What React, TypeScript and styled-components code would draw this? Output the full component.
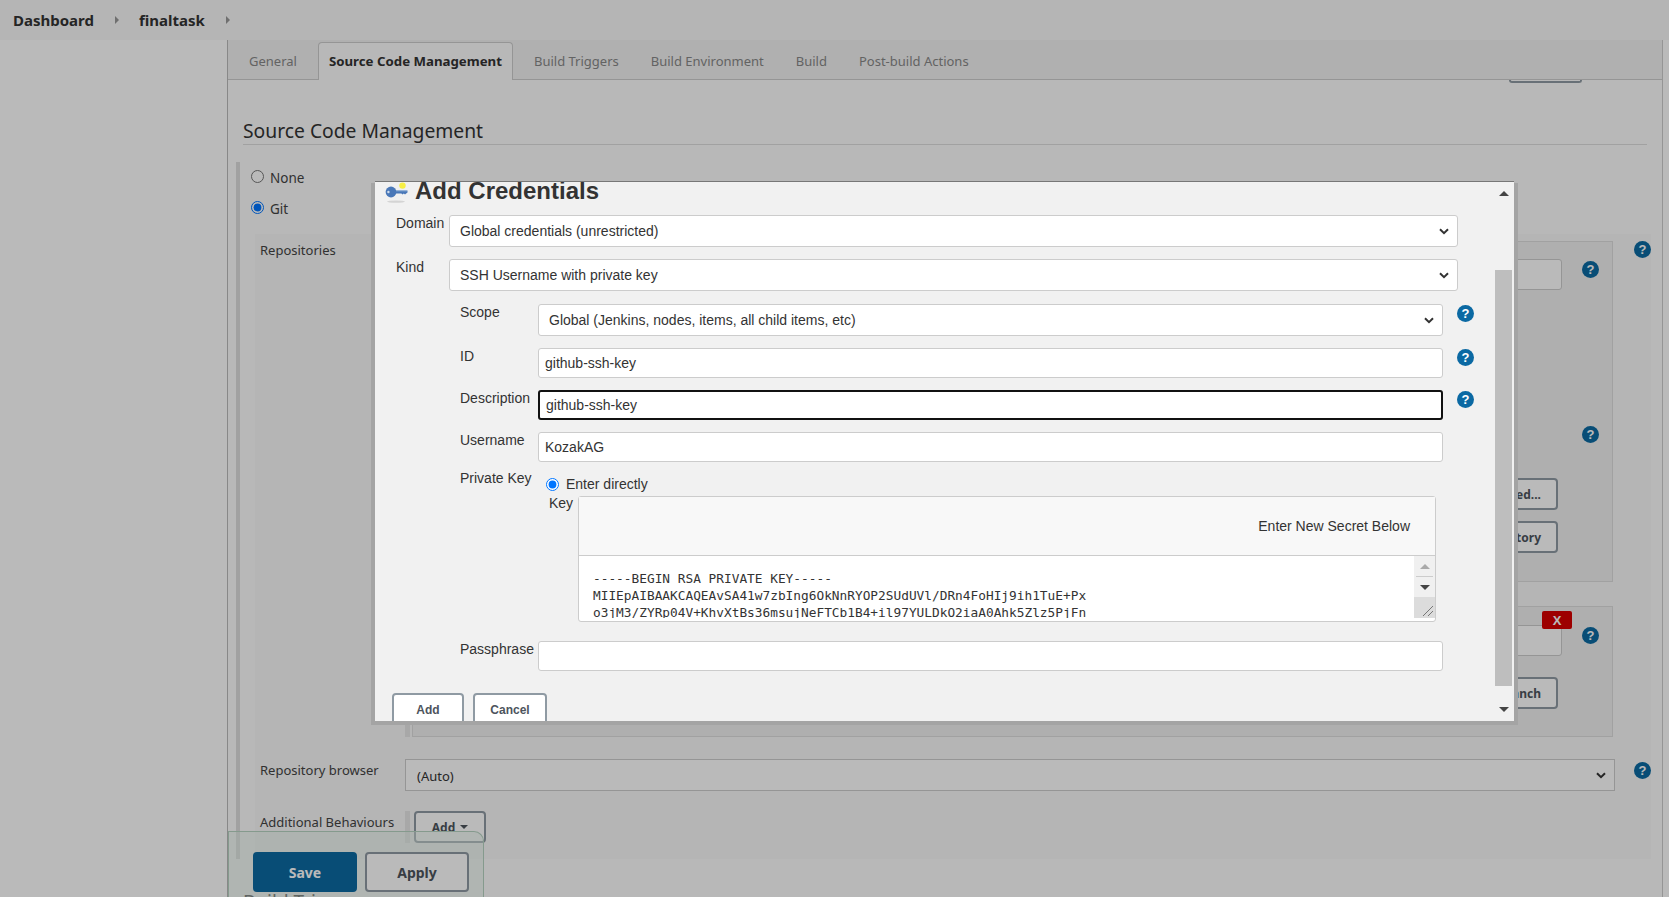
import { ReactNode } from "react";
import styled, { createGlobalStyle, css } from "styled-components";

const GlobalStyle = createGlobalStyle`
  html, body {
    margin: 0;
    height: 897px;
    overflow: hidden;
    background: #fff;
  }
  * {
    box-sizing: border-box;
  }
`;

const chevron = `url("data:image/svg+xml,%3Csvg xmlns='http://www.w3.org/2000/svg' width='10' height='7' viewBox='0 0 10 7'%3E%3Cpath d='M1 1.2 L5 5.2 L9 1.2' fill='none' stroke='%23333' stroke-width='2'/%3E%3C/svg%3E")`;

const selectBase = css`
  appearance: none;
  padding-left: 10px;
  background-color: #fff;
  background-image: ${chevron};
  background-repeat: no-repeat;
  background-position: right 8px center;
  color: #333;
  border: 1px solid #ccc;
`;

const Page = styled.div`
  position: relative;
  width: 1669px;
  height: 897px;
  overflow: hidden;
  background: #fff;
  color: #333;
  font-family: "Noto Sans", sans-serif;
  font-size: 13px;
`;

const Crumbs = styled.div`
  height: 40px;
  display: flex;
  align-items: center;
  padding-left: 13px;
  background: #f9f9f9;
  font-size: 15px;
  font-weight: 700;
  color: #333;
`;

const CrumbArrow = styled.span`
  width: 0;
  height: 0;
  margin: 0 20px 0 21px;
  border-left: 4px solid #999;
  border-top: 4px solid transparent;
  border-bottom: 4px solid transparent;
`;

const Body = styled.div`
  display: flex;
  height: 857px;
`;

const Sidebar = styled.div`
  width: 227px;
  flex: none;
`;

const Main = styled.main`
  position: relative;
  width: 1436px;
  flex: none;
  border-left: 1px solid #bbb;
  border-right: 1px solid #ccc;
  background: #fcfcfc;
`;

const TabBar = styled.div`
  height: 40px;
  padding: 2px 0 0 5px;
  display: flex;
  background: #f2f2f2;
  border-bottom: 1px solid #ccc;
`;

const Tab = styled.div<{ $active?: boolean }>`
  height: 38px;
  padding: 0 ${(p) => (p.$active ? "10px" : "16px")};
  padding-bottom: ${(p) => (p.$active ? "2px" : "0")};
  margin: 0 ${(p) => (p.$active ? "5px" : "0")};
  display: flex;
  align-items: center;
  font-size: ${(p) => (p.$active ? "13.25px" : "13px")};
  white-space: nowrap;
  color: ${(p) => (p.$active ? "#333" : "#888")};
  font-weight: ${(p) => (p.$active ? 700 : 400)};
  background: ${(p) => (p.$active ? "#fcfcfc" : "transparent")};
  border: ${(p) => (p.$active ? "1px solid #ccc" : "none")};
  border-bottom: none;
  border-radius: 4px 4px 0 0;
`;

const ClippedButton = styled.div`
  width: 73px;
  height: 3px;
  margin-left: 1281px;
  border: 2px solid #8f9aa3;
  border-top: none;
  border-radius: 0 0 4px 4px;
`;

const SectionTitle = styled.h2`
  margin: 34px 15px 0 15px;
  height: 28px;
  font-size: 19.3px;
  font-weight: 400;
  line-height: 27px;
  color: #333;
  border-bottom: 1px solid #ddd;
`;

const ScmBlock = styled.div`
  margin: 17px 0 0 8px;
  height: 697px;
  border-left: 4px solid #ddd;
`;

const RadioRow = styled.label<{ $height: number }>`
  height: ${(p) => p.$height}px;
  padding: 7px 0 0 11px;
  display: flex;
  align-items: flex-start;
  gap: 6px;
  font-size: 13.5px;
  color: #444;

  input {
    margin: 1px 0 0;
    width: 13px;
    height: 13px;
  }
`;

const GitPanel = styled.div`
  margin-left: 15px;
  width: 1396px;
  height: 625px;
  padding-top: 7px;
  display: grid;
  grid-template-columns: 150px 1210px 36px;
  grid-template-rows: 518px 52px 48px;
  background: #f8f8f8;
`;

const RowLabel = styled.div<{ $top?: number }>`
  padding: ${(p) => p.$top ?? 0}px 0 0 5px;
  font-size: 13px;
  line-height: 18px;
  color: #444;
`;

const RepoColumn = styled.div`
  display: flex;
  flex-direction: column;
  gap: 24px;
  padding-left: 2px;
  border-left: 5px solid #e6e6e6;
  margin-bottom: 22px;
`;

const RepoBox = styled.div<{ $height: number }>`
  position: relative;
  width: 1201px;
  height: ${(p) => p.$height}px;
  flex: none;
  padding: 17px 13px 0 100px;
  display: flex;
  flex-direction: column;
  align-items: stretch;
  background: #f0f0f0;
  border: 1px solid #ddd;
`;

const RepoRow = styled.div<{ $top?: number }>`
  display: flex;
  justify-content: flex-end;
  align-items: flex-start;
  gap: 20px;
  margin-top: ${(p) => p.$top ?? 0}px;

  & > span {
    margin-top: 2px;
  }
`;

const FakeInput = styled.div`
  flex: 1;
  height: 31px;
  background: #fff;
  border: 1px solid #ccc;
  border-radius: 3px;
`;

const GhostButton = styled.div<{ $top: number }>`
  align-self: flex-end;
  width: 140px;
  height: 32px;
  flex: none;
  margin: ${(p) => p.$top}px 41px 0 0;
  padding-right: 15px;
  display: flex;
  align-items: center;
  justify-content: flex-end;
  font-size: 12px;
  font-weight: 700;
  color: #4d545d;
  background: #fff;
  border: 2px solid #8f9aa3;
  border-radius: 4px;
`;

const RemoveButton = styled.div`
  position: absolute;
  top: 4px;
  right: 40px;
  width: 30px;
  height: 18px;
  display: flex;
  align-items: center;
  justify-content: center;
  font-family: "Liberation Sans", Arial, sans-serif;
  font-size: 13px;
  font-weight: 700;
  color: #fff;
  background: #d80000;
  border-radius: 2px;
`;

const Help = styled.span<{ $modal?: boolean }>`
  width: 17px;
  height: 17px;
  flex: none;
  display: flex;
  align-items: center;
  justify-content: center;
  border-radius: 50%;
  font-family: "Liberation Sans", Arial, sans-serif;
  font-size: 13px;
  font-weight: 700;
  line-height: 1;
  color: #fff;
  background: ${(p) => (p.$modal ? "#0b69a3" : "#0b6aa2")};
`;

const HelpCell = styled.div<{ $top: number }>`
  padding: ${(p) => p.$top}px 0 0 19px;
`;

const PageSelect = styled.select`
  ${selectBase}
  width: 1210px;
  height: 32px;
  padding: 2px 0 0 11px;
  font-family: "Noto Sans", sans-serif;
  font-size: 13px;
`;

const BehaviourCell = styled.div`
  display: flex;
  gap: 4px;
`;

const BehaviourBar = styled.span`
  width: 5px;
  height: 32px;
  background: #e6e6e6;
`;

const BehaviourButton = styled.div`
  width: 72px;
  height: 32px;
  display: flex;
  align-items: center;
  justify-content: center;
  gap: 5px;
  font-size: 12px;
  font-weight: 700;
  color: #4d545d;
  background: #fff;
  border: 2px solid #8f9aa3;
  border-radius: 4px;

  &::after {
    content: "";
    border-top: 4px solid #4d545d;
    border-left: 4px solid transparent;
    border-right: 4px solid transparent;
  }
`;

const NextTitle = styled.h2`
  margin: 30px 0 0 15px;
  font-size: 19px;
  font-weight: 400;
  line-height: 27px;
`;

const BottomBar = styled.div`
  position: absolute;
  left: 0;
  bottom: 0;
  width: 256px;
  height: 66px;
  padding: 20px 0 0 24px;
  display: flex;
  gap: 8px;
  background: rgba(229, 245, 234, 0.45);
  border: 1px solid #b7d4c2;
  border-bottom: none;
  border-radius: 0 10px 0 0;
`;

const BarButton = styled.div<{ $primary?: boolean }>`
  width: 104px;
  height: 40px;
  display: flex;
  align-items: center;
  justify-content: center;
  font-size: 14px;
  font-weight: 700;
  color: ${(p) => (p.$primary ? "#fff" : "#4d545d")};
  background: ${(p) => (p.$primary ? "#0b6aa2" : "#fff")};
  border: 2px solid ${(p) => (p.$primary ? "#0b6aa2" : "#8f9aa3")};
  border-radius: 4px;
`;

const Mask = styled.div`
  position: absolute;
  inset: 0;
  background: rgba(0, 0, 0, 0.27);
`;

const Modal = styled.section`
  position: absolute;
  left: 375px;
  top: 181px;
  width: 1139px;
  height: 540px;
  overflow: hidden;
  background: #f1f1f1;
  color: #333;
  font-family: "Liberation Sans", Arial, sans-serif;
  font-size: 14px;
  border-top: 1px solid #777;
`;

const ModalShadow = styled.div`
  position: absolute;
  left: 371px;
  top: 183px;
  width: 1147px;
  height: 542px;
  background: #a4a4a4;
`;

const ModalTitle = styled.div`
  height: 33px;
  padding-left: 10px;
  display: flex;
  align-items: flex-start;
  gap: 6px;

  h1 {
    margin: -5px 0 0;
    font-size: 24px;
    font-weight: 700;
    line-height: 28px;
    color: #333;
  }
`;

const FormRow = styled.div<{ $indent?: number; $after?: number }>`
  display: flex;
  padding-left: ${(p) => p.$indent ?? 21}px;
  margin-bottom: ${(p) => p.$after ?? 12}px;
`;

const FieldLabel = styled.div<{ $width: number }>`
  width: ${(p) => p.$width}px;
  flex: none;
  font-size: 14px;
  line-height: 16px;
  color: #333;
`;

const Select = styled.select<{ $width: number }>`
  ${selectBase}
  width: ${(p) => p.$width}px;
  height: 32px;
  font-family: "Liberation Sans", Arial, sans-serif;
  font-size: 14px;
  border-radius: 3px;
`;

const TextInput = styled.input<{ $focused?: boolean }>`
  width: 905px;
  height: 30px;
  padding: 0 6px;
  font-family: "Liberation Sans", Arial, sans-serif;
  font-size: 14px;
  color: #333;
  background: #fff;
  border: ${(p) => (p.$focused ? "2px solid #111" : "1px solid #ccc")};
  border-radius: 3px;
  outline: none;
`;

const HelpSlot = styled.div`
  margin: 1px 0 0 14px;
`;

const KeyBlock = styled.div`
  padding-left: 85px;
  margin-bottom: 19px;
`;

const DirectRow = styled.label`
  display: flex;
  align-items: center;
  height: 16px;
  margin-bottom: 4px;
`;

const DirectLabel = styled.div`
  width: 86px;
  line-height: 16px;
  transform: translateY(-6px);
`;

const DirectRadio = styled.input`
  width: 13px;
  height: 13px;
  margin: 0 7px 0 0;
`;

const KeyRow = styled.div`
  display: flex;
  padding-left: 89px;
`;

const KeyLabel = styled.div`
  width: 29px;
  margin-top: -1px;
  line-height: 16px;
  flex: none;
`;

const SecretBox = styled.div`
  width: 858px;
  height: 126px;
  background: #fff;
  border: 1px solid #ccc;
  border-radius: 3px;
`;

const SecretHeader = styled.div`
  height: 59px;
  padding: 21px 25px 0 0;
  text-align: right;
  line-height: 16px;
  background: #f8f8f8;
  border-bottom: 1px solid #ccc;
`;

const SecretBody = styled.div`
  display: flex;
  height: 62px;
  overflow: hidden;
`;

const KeyText = styled.pre`
  flex: 1;
  margin: 0;
  padding: 14px 0 0 14px;
  overflow: hidden;
  font-family: "DejaVu Sans Mono", monospace;
  font-size: 12.8px;
  line-height: 17px;
  color: #333;
`;

const TextScroll = styled.div`
  width: 21px;
  flex: none;
  display: flex;
  flex-direction: column;
  background: #f0f0f0;
`;

const ScrollButton = styled.div<{ $height: number; $down?: boolean; $muted?: boolean }>`
  height: ${(p) => p.$height}px;
  display: flex;
  align-items: center;
  justify-content: center;

  &::after {
    content: "";
    border-left: 5px solid transparent;
    border-right: 5px solid transparent;
    ${(p) => (p.$down ? "border-top" : "border-bottom")}: 5px solid ${(p) =>
      p.$muted ? "#aaa" : "#444"};
  }
`;

const ScrollRule = styled.div`
  height: 1px;
  margin: 0 2px;
  background: #ccc;
`;

const ResizeCorner = styled.div`
  height: 21px;
  margin-top: auto;
  display: flex;
  align-items: flex-end;
  justify-content: flex-end;
  background: #dcdcdc;
`;

const ModalActions = styled.div`
  display: flex;
  gap: 9px;
  padding-left: 17px;
  margin-top: 22px;
`;

const ModalButton = styled.div<{ $width: number }>`
  width: ${(p) => p.$width}px;
  height: 34px;
  padding-top: 7px;
  text-align: center;
  font-size: 12px;
  line-height: 16px;
  font-weight: 700;
  color: #4d545d;
  background: #fff;
  border: 2px solid #8f9aa3;
  border-radius: 4px;
`;

const ModalScroll = styled.div`
  position: absolute;
  top: 0;
  right: 2px;
  width: 17px;
  height: 100%;
  display: flex;
  flex-direction: column;
`;

const ModalThumb = styled.div`
  height: 416px;
  margin-top: 88px;
  flex: none;
  background: #bebebe;
`;

const ModalArrow = styled.div<{ $down?: boolean }>`
  height: ${(p) => (p.$down ? "46px" : "14px")};
  flex: none;
  display: flex;
  align-items: ${(p) => (p.$down ? "center" : "flex-end")};
  justify-content: center;
  margin-bottom: ${(p) => (p.$down ? "0" : "-14px")};

  &::after {
    content: "";
    border-left: 5px solid transparent;
    border-right: 5px solid transparent;
    ${(p) => (p.$down ? "border-top" : "border-bottom")}: 5px solid #444;
  }
`;

const KeyIcon = () => (
  <svg width="24" height="22" viewBox="0 0 24 22">
    <ellipse cx="11" cy="19.6" rx="9" ry="1.2" fill="#d4d4d4" />
    <circle cx="17.5" cy="3.6" r="3.2" fill="#f7ef45" />
    <circle cx="6" cy="10" r="5.4" fill="#4a78b8" />
    <circle cx="3.4" cy="10" r="1.2" fill="#cfdcec" />
    <path d="M10 8.4 H22.5 V10.6 L21.2 11.6 L20 12.6 L18.8 11.6 L17.6 12.6 L16.4 11.6 H10 Z" fill="#4a78b8" />
    <path d="M11 8.9 H22" stroke="#8fb0d8" strokeWidth="0.8" />
  </svg>
);

const ResizeGrip = () => (
  <svg width="14" height="14" viewBox="0 0 14 14">
    <path d="M2 12 L12 2 M7 12 L12 7" stroke="#777" strokeWidth="1" />
  </svg>
);

const Field = ({
  label,
  children,
  help,
  after,
}: {
  label: string;
  children: ReactNode;
  help?: boolean;
  after?: number;
}) => (
  <FormRow $indent={85} $after={after}>
    <FieldLabel $width={78}>{label}</FieldLabel>
    {children}
    {help && (
      <HelpSlot>
        <Help $modal>?</Help>
      </HelpSlot>
    )}
  </FormRow>
);

const tabs = ["Build Triggers", "Build Environment", "Build", "Post-build Actions"];

const keyLines = `-----BEGIN RSA PRIVATE KEY-----
MIIEpAIBAAKCAQEAvSA41w7zbIng6OkNnRYOP2SUdUVl/DRn4FoHIj9ih1TuE+Px
o3jM3/ZYRp04V+KhvXtBs36msujNeFTCb1B4+il97YULDkO2iaA0Ahk5Zlz5PjFn`;

const App = () => {
  return (
    <Page>
      <GlobalStyle />
      <Crumbs>
        <span>Dashboard</span>
        <CrumbArrow />
        <span>finaltask</span>
        <CrumbArrow />
      </Crumbs>
      <Body>
        <Sidebar />
        <Main>
          <TabBar>
            <Tab>General</Tab>
            <Tab $active>Source Code Management</Tab>
            {tabs.map((tab) => (
              <Tab key={tab}>{tab}</Tab>
            ))}
          </TabBar>
          <ClippedButton />
          <SectionTitle>Source Code Management</SectionTitle>
          <ScmBlock>
            <RadioRow $height={31}>
              <input type="radio" name="scm" />
              None
            </RadioRow>
            <RadioRow $height={41}>
              <input type="radio" name="scm" defaultChecked />
              Git
            </RadioRow>
            <GitPanel>
              <RowLabel>Repositories</RowLabel>
              <RepoColumn>
                <RepoBox $height={341}>
                  <RepoRow>
                    <FakeInput />
                    <Help>?</Help>
                  </RepoRow>
                  <RepoRow $top={134}>
                    <Help>?</Help>
                  </RepoRow>
                  <GhostButton $top={35}>Advanced...</GhostButton>
                  <GhostButton $top={11}>Add Repository</GhostButton>
                </RepoBox>
                <RepoBox $height={131}>
                  <RemoveButton>X</RemoveButton>
                  <RepoRow $top={1}>
                    <FakeInput />
                    <Help>?</Help>
                  </RepoRow>
                  <GhostButton $top={21}>Add Branch</GhostButton>
                </RepoBox>
              </RepoColumn>
              <HelpCell $top={0}>
                <Help>?</Help>
              </HelpCell>
              <RowLabel $top={2}>Repository browser</RowLabel>
              <PageSelect>
                <option>(Auto)</option>
              </PageSelect>
              <HelpCell $top={3}>
                <Help>?</Help>
              </HelpCell>
              <RowLabel $top={2}>Additional Behaviours</RowLabel>
              <BehaviourCell>
                <BehaviourBar />
                <BehaviourButton>Add</BehaviourButton>
              </BehaviourCell>
            </GitPanel>
          </ScmBlock>
          <NextTitle>Build Triggers</NextTitle>
          <BottomBar>
            <BarButton $primary>Save</BarButton>
            <BarButton>Apply</BarButton>
          </BottomBar>
        </Main>
      </Body>
      <Mask />
      <ModalShadow />
      <Modal>
        <ModalTitle>
          <KeyIcon />
          <h1>Add Credentials</h1>
        </ModalTitle>
        <FormRow>
          <FieldLabel $width={53}>Domain</FieldLabel>
          <Select $width={1009}>
            <option>Global credentials (unrestricted)</option>
          </Select>
        </FormRow>
        <FormRow $after={13}>
          <FieldLabel $width={53}>Kind</FieldLabel>
          <Select $width={1009}>
            <option>SSH Username with private key</option>
          </Select>
        </FormRow>
        <Field label="Scope" help>
          <Select $width={905}>
            <option>Global (Jenkins, nodes, items, all child items, etc)</option>
          </Select>
        </Field>
        <Field label="ID" help>
          <TextInput defaultValue="github-ssh-key" />
        </Field>
        <Field label="Description" help>
          <TextInput $focused defaultValue="github-ssh-key" />
        </Field>
        <Field label="Username" after={14}>
          <TextInput defaultValue="KozakAG" />
        </Field>
        <KeyBlock>
          <DirectRow>
            <DirectLabel>Private Key</DirectLabel>
            <DirectRadio type="radio" defaultChecked />
            Enter directly
          </DirectRow>
          <KeyRow>
            <KeyLabel>Key</KeyLabel>
            <SecretBox>
              <SecretHeader>Enter New Secret Below</SecretHeader>
              <SecretBody>
                <KeyText>{keyLines}</KeyText>
                <TextScroll>
                  <ScrollButton $height={20} $muted />
                  <ScrollRule />
                  <ScrollButton $height={20} $down />
                  <ResizeCorner>
                    <ResizeGrip />
                  </ResizeCorner>
                </TextScroll>
              </SecretBody>
            </SecretBox>
          </KeyRow>
        </KeyBlock>
        <Field label="Passphrase" after={0}>
          <TextInput />
        </Field>
        <ModalActions>
          <ModalButton $width={72}>Add</ModalButton>
          <ModalButton $width={74}>Cancel</ModalButton>
        </ModalActions>
        <ModalScroll>
          <ModalArrow />
          <ModalThumb />
          <ModalArrow $down />
        </ModalScroll>
      </Modal>
    </Page>
  );
};

export default App;
